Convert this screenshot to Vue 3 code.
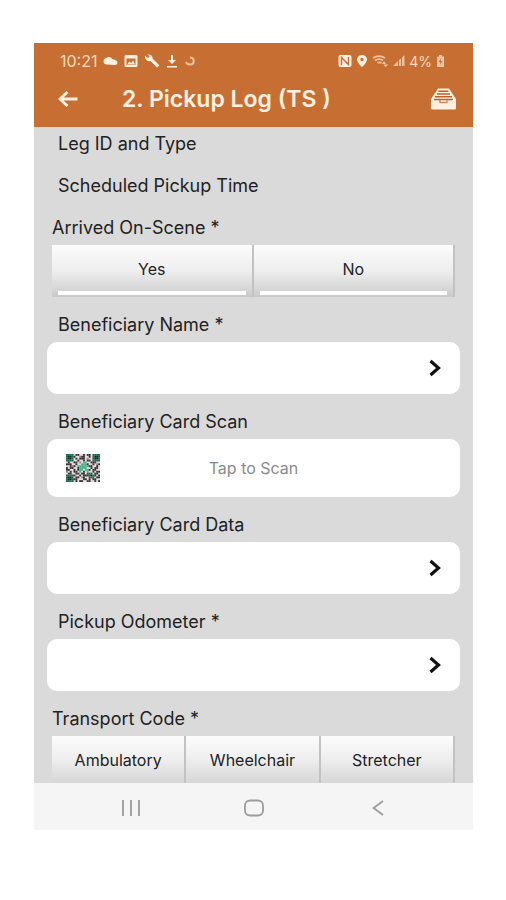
<script setup>
import { ref } from 'vue'

const arrived = ref('')
const transport = ref('')

const qrRows = [
  'GGGG.##..#.##.GGGG',
  'GKKG#..o##..#.GKKG',
  'GKKG.#.###.o..GKKG',
  'GGGG..#..#.##.GGGG',
  '.#..##.o.tt..###..',
  '###..#..ttt#..#.o#',
  '..#o#.tttttt##..#.',
  '#.##..#tttt..#.##.',
  '##..#.#tt.tt#.##..',
  'o.#.##.t.#.t..#.##',
  '.##..##.##.GGG.##.',
  'GGGG#..#.###GKG#.#',
  'GKKG.##.o#..GGG.##',
  'GKKG##...##.#.##..',
  'GGGG.#.##..##..#.#',
]
const tones = { G: '#17684e', K: '#12251f', '#': '#3a3336', o: '#97868a', t: '#4bb58f' }
const qrCells = qrRows.flatMap((row, y) =>
  [...row].map((c, x) => ({ x, y, fill: tones[c] })).filter((c) => c.fill)
)
</script>

<template>
  <main class="phone">
    <header class="top">
      <div class="status">
        <div class="status-side left">
          <span>10:21</span>
          <svg width="15" height="12" viewBox="0 0 15 12"><path fill="currentColor" d="M4 9.500C1.500 9.500.5 8 .5 6.200S2 3 3.500 3C4.500 1.600 8 1.400 9 4c2.500.2 5.500 1.800 5.500 3.600S13 10 12 10Z" /></svg>
          <svg width="14" height="14" viewBox="0 0 14 14"><path fill="currentColor" fill-rule="evenodd" d="M2 1h10A1.500 1.500 0 0 1 13.500 2.500v9A1.500 1.500 0 0 1 12 13H2A1.500 1.500 0 0 1 .5 11.500v-9A1.500 1.500 0 0 1 2 1ZM2.500 4.500V11h9V4.500Z" /><path fill="currentColor" d="m3 10.500 2.500-3 1.800 1.500 1.700-2.500 2.200 4z" /></svg>
          <svg width="16" height="14" viewBox="0 0 16 14"><path fill="currentColor" d="M1 1.500 4 4l1.800-1.200L3.600.5C6 0 9 1.500 8.600 4.600L15.500 11.500 13 13.600 6.600 7C3.500 8 .3 5 1 1.500Z" /></svg>
          <svg width="12" height="14" viewBox="0 0 12 14"><path fill="currentColor" d="M5 1h2v5h3l-4 4-4-4h3zM1 12h10v1.500H1z" /></svg>
          <svg class="faint" width="12" height="12" viewBox="0 0 12 12"><path fill="none" stroke="currentColor" stroke-width="2" d="M6 2.500c5 0 5 7 0 7-2 0-3.500-1-4-2.500" /></svg>
        </div>
        <div class="status-side right">
          <svg width="14" height="14" viewBox="0 0 14 14"><rect x=".5" y="1" width="13" height="12" rx="2" fill="currentColor" /><path fill="none" stroke="#c76f32" stroke-width="1.400" d="M3.500 11V3.500L10.500 10.500V3" /></svg>
          <svg width="12" height="14" viewBox="0 0 12 14"><path fill="currentColor" fill-rule="evenodd" d="M6 1a5 4.500 0 0 0-5 4.500C1 8.500 6 13 6 13s5-4.500 5-7.500A5 4.500 0 0 0 6 1Zm0 2.800a1.700 1.700 0 1 1 0 3.400 1.700 1.700 0 0 1 0-3.400Z" /></svg>
          <svg class="faint" width="17" height="14" viewBox="0 0 17 14"><path fill="none" stroke="currentColor" stroke-width="1.800" d="M1 4c4-2.500 8-2.500 12 0M3 6.500c3-2 5.500-2 8 0M5.500 9c1.500-1 2.500-1 4 0" /><path fill="currentColor" d="M12 7l2 3h-4zM13.500 13l-2-2.500h5z" /></svg>
          <svg class="faint" width="12" height="12" viewBox="0 0 12 12"><path fill="currentColor" d="M0 11 5 6v5zM6 5l2-1.500V11H6zM9 2.500 11.500 0v11H9z" /></svg>
          <span>4%</span>
          <svg class="faint" width="9" height="12" viewBox="0 0 9 12"><path fill="currentColor" d="M3 0h3v1.500h2V12H1V1.500h2z" /><path fill="#c76f32" d="M4.800 3.500 2.800 7h1.500l-.3 3 2.200-4H4.800z" /></svg>
        </div>
      </div>
      <div class="bar">
        <button type="button" aria-label="Back">
          <svg width="20" height="16" viewBox="0 0 20 16"><path fill="none" stroke="currentColor" stroke-width="2.800" d="M19.500 8H2M9.500 1 2 8l7.500 7" /></svg>
        </button>
        <h1>2. Pickup Log (TS )</h1>
        <button type="button" aria-label="Inbox">
          <svg width="27" height="22" viewBox="0 0 27 22">
            <path fill="currentColor" d="M8 .5h11L26 11v9q0 1.500-1.500 1.500h-22Q1 21.500 1 20v-9Z" />
            <path fill="none" stroke="#b9632c" stroke-width="1.500" d="M8.500 3.200h10M7 6h13M5 8.800h17M4 11.500h19" />
            <path fill="none" stroke="#c98a60" stroke-width="1.300" d="M10 12v2.500h7V12" />
          </svg>
        </button>
      </div>
    </header>

    <form class="form" @submit.prevent>
      <div class="facts">
        <p class="label">Leg ID and Type</p>
        <p class="label">Scheduled Pickup Time</p>
      </div>

      <div class="group" role="radiogroup" aria-labelledby="arrived">
        <span id="arrived" class="label wide">Arrived On-Scene *</span>
        <div class="segments">
          <label v-for="o in ['Yes', 'No']" :key="o" class="segment lined">
            <input v-model="arrived" type="radio" name="arrived" :value="o" />{{ o }}
          </label>
        </div>
      </div>

      <div class="group">
        <label class="label" for="name">Beneficiary Name *</label>
        <button id="name" class="field" type="button">
          <svg width="12" height="18" viewBox="0 0 12 18"><path fill="none" stroke="currentColor" stroke-width="3.200" d="M1.500 2 9.500 9l-8 7" /></svg>
        </button>
      </div>

      <div class="group">
        <label class="label" for="scan">Beneficiary Card Scan</label>
        <button id="scan" class="field scan" type="button">
          <svg width="34" height="28" viewBox="0 0 18 15" preserveAspectRatio="none">
            <rect width="18" height="15" fill="#e3dcdd" />
            <rect v-for="c in qrCells" :key="`${c.x}-${c.y}`" :x="c.x" :y="c.y" width="1" height="1" :fill="c.fill" />
          </svg>
          <span>Tap to Scan</span>
        </button>
      </div>

      <div class="group">
        <label class="label" for="data">Beneficiary Card Data</label>
        <button id="data" class="field" type="button">
          <svg width="12" height="18" viewBox="0 0 12 18"><path fill="none" stroke="currentColor" stroke-width="3.200" d="M1.500 2 9.500 9l-8 7" /></svg>
        </button>
      </div>

      <div class="group">
        <label class="label" for="odometer">Pickup Odometer *</label>
        <button id="odometer" class="field" type="button">
          <svg width="12" height="18" viewBox="0 0 12 18"><path fill="none" stroke="currentColor" stroke-width="3.200" d="M1.500 2 9.500 9l-8 7" /></svg>
        </button>
      </div>

      <div class="group" role="radiogroup" aria-labelledby="transport">
        <span id="transport" class="label wide">Transport Code *</span>
        <div class="segments">
          <label v-for="o in ['Ambulatory', 'Wheelchair', 'Stretcher']" :key="o" class="segment">
            <input v-model="transport" type="radio" name="transport" :value="o" />{{ o }}
          </label>
        </div>
      </div>
    </form>

    <nav class="nav" aria-label="System">
      <button type="button" aria-label="Recent apps">
        <svg width="20" height="16" viewBox="0 0 20 16"><path stroke="currentColor" stroke-width="1.800" d="M2 0v16M10 0v16M18 0v16" /></svg>
      </button>
      <button type="button" aria-label="Home">
        <svg width="20" height="18" viewBox="0 0 20 18"><rect x="1" y="1.500" width="18" height="15" rx="5" fill="none" stroke="currentColor" stroke-width="1.800" /></svg>
      </button>
      <button type="button" aria-label="Back">
        <svg width="12" height="16" viewBox="0 0 12 16"><path fill="none" stroke="currentColor" stroke-width="1.800" d="M11 1 1.500 8l9.500 7" /></svg>
      </button>
    </nav>
  </main>
</template>

<style>
body {
  background: #fff;
}
</style>

<style scoped>
.phone {
  margin: 43px 33px 70px 34px;
  background: #dadada;
  color: #222;
  font-family: Inter, Roboto, sans-serif;
  font-size: 18px;
}
button {
  border: 0;
  padding: 0;
  background: none;
  color: inherit;
  font: inherit;
}
svg {
  display: block;
  flex: none;
}
.top {
  background: #c76f32;
  color: #fff0e0;
}
.status {
  display: flex;
  justify-content: space-between;
  height: 36px;
  padding: 0 28px 0 26px;
  font-size: 14px;
}
.status span {
  color: #fbd9bd;
}
.status-side {
  display: flex;
  align-items: center;
}
.left {
  gap: 6px;
  font-size: 16px;
}
.right {
  gap: 4px;
}
.faint {
  opacity: 0.65;
}
.bar {
  display: flex;
  align-items: center;
  height: 48px;
  padding: 0 16px 8px 24px;
  box-sizing: border-box;
}
h1 {
  flex: 1;
  margin: 0 0 0 44px;
  font-size: 23px;
  font-weight: 600;
  line-height: 28px;
}
.form {
  display: flex;
  flex-direction: column;
  gap: 16px;
  padding: 5px 13px 0;
}
.facts {
  display: grid;
  gap: 18px;
  padding-bottom: 2px;
}
.label {
  margin: 0;
  padding-left: 11px;
  line-height: 24px;
}
.wide {
  padding-left: 5px;
}
.group {
  display: flex;
  flex-direction: column;
  gap: 5px;
}
.segments {
  display: flex;
  gap: 2px;
  margin: 0 5px;
  background: #c2c2c2;
  border-right: 2px solid #c2c2c2;
}
.segment {
  display: flex;
  flex: 1;
  align-items: center;
  justify-content: center;
  height: 47px;
  background: linear-gradient(#fcfcfc, #eee 50%, #d6d6d6);
  font-size: 16px;
}
.lined {
  height: 48px;
  padding-bottom: 4px;
  background:
    linear-gradient(#fff, #fff) center bottom 2px / calc(100% - 12px) 4px no-repeat,
    linear-gradient(#fcfcfc, #eee 50%, #d2d2d2 90%, #c8c8c8);
}
.segment input {
  appearance: none;
  width: 0;
  height: 0;
  margin: 0;
}
.field {
  display: flex;
  align-items: center;
  justify-content: flex-end;
  height: 52px;
  padding: 0 19px;
  border-radius: 10px;
  background: #fff;
  color: #111;
}
.scan {
  display: grid;
  grid-template-columns: 34px 1fr 34px;
  height: 58px;
  color: #8a8a8a;
  font-size: 16px;
}
.nav {
  display: grid;
  grid-template-columns: repeat(3, 1fr);
  height: 47px;
  padding: 2px 33px 0 35px;
  box-sizing: border-box;
  background: #f5f5f5;
  color: #9b9b9b;
}
.nav button {
  display: grid;
  place-items: center;
}
</style>
